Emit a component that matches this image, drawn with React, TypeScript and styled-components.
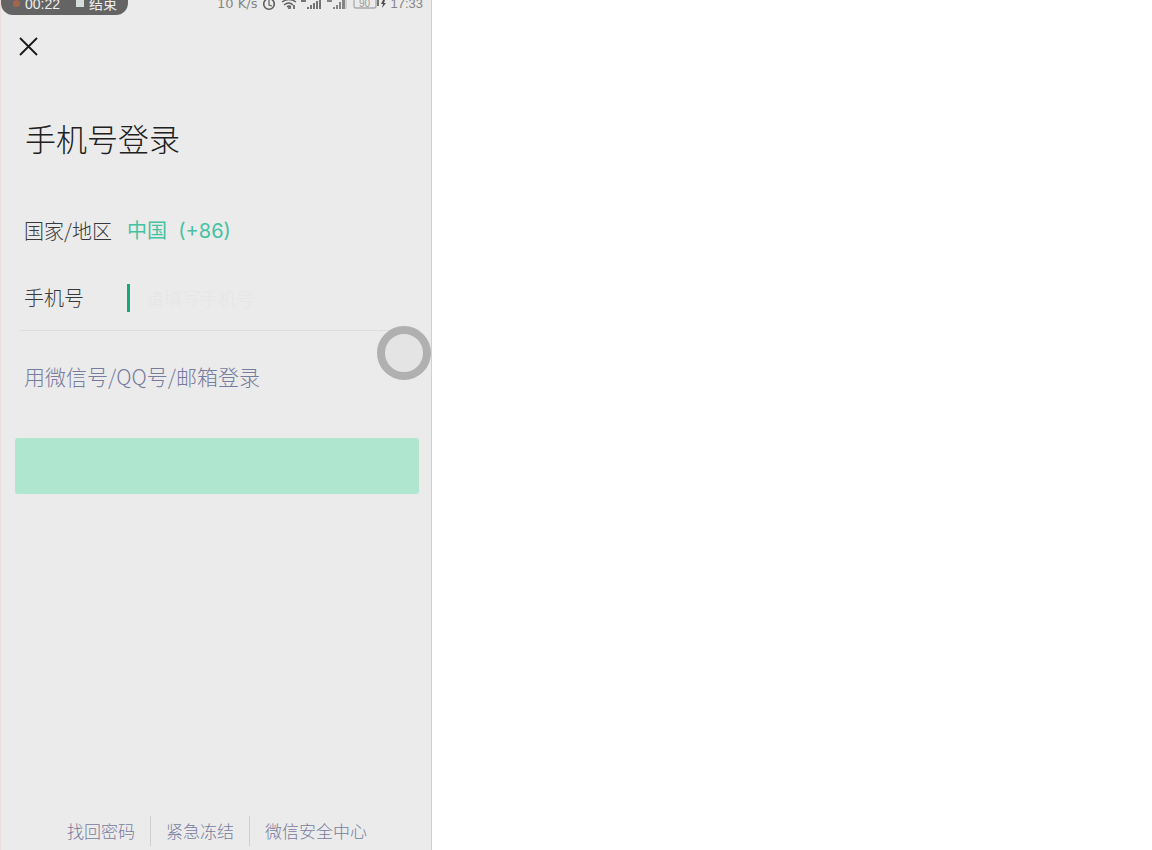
import React from "react";
import styled, { createGlobalStyle } from "styled-components";

const GlobalStyle = createGlobalStyle`
  * { box-sizing: border-box; }
  body {
    margin: 0;
    background: #fff;
    font-family: "Noto Sans CJK SC", "Noto Sans", sans-serif;
  }
`;

const Screen = styled.main`
  position: relative;
  display: flex;
  flex-direction: column;
  width: 37.5%;
  min-height: 100vh;
  overflow: hidden;
  background: #ebebeb;
  border-left: 1px solid #eedddd;
  border-right: 1px solid #a9dcf8;
`;

const StatusBar = styled.header`
  display: flex;
  justify-content: space-between;
  height: 15px;
  padding-right: 8px;
  font-family: "Liberation Sans", "Noto Sans CJK SC", sans-serif;
  font-size: 13px;
  line-height: 8px;
  white-space: nowrap;
  color: #858585;
`;

const RecordingPill = styled.div`
  display: flex;
  width: 127px;
  height: 15px;
  padding-left: 12px;
  border-radius: 0 0 12px 12px;
  background: #646464;
  color: #efefef;
  font-size: 14px;
`;

const RecordDot = styled.span`
  width: 7px;
  height: 7px;
  margin-right: 5px;
  border-radius: 50%;
  background: #a0654c;
`;

const StopSquare = styled.span`
  width: 8px;
  height: 7px;
  margin: 0 5px 0 16px;
  background: #d5dcdc;
`;

const StatusItems = styled.div`
  display: flex;
  gap: 4px;
`;

const Speed = styled.span`
  font-family: "DejaVu Sans", sans-serif;
`;

const StatusIcons = styled.svg`
  display: block;
  width: 125px;
  height: 12px;
`;

const CloseButton = styled.button`
  align-self: flex-start;
  display: flex;
  margin: 22px 0 0 17px;
  padding: 0;
  border: 0;
  background: none;
  color: #181818;
`;

const Title = styled.h1`
  margin: 60px 0 0 24px;
  font-size: 31px;
  font-weight: 300;
  line-height: 42px;
  color: #202020;
`;

const Form = styled.form`
  display: flex;
  flex-direction: column;
`;

const Field = styled.div`
  display: flex;
  align-items: center;
  height: 68px;
  margin: 0 18px 0 19px;
  padding-left: 4px;
  font-size: 20px;
  font-weight: 300;
  line-height: 28px;
  white-space: nowrap;
  color: #383838;
`;

const RegionField = styled(Field)`
  margin-top: 38px;
`;

const PhoneField = styled(Field)`
  height: 66px;
  border-bottom: 1px solid #dedede;
`;

const Label = styled.label`
  flex: 0 0 103px;
`;

const RegionButton = styled.button`
  padding: 0;
  border: 0;
  background: none;
  font-family: Inter, "Noto Sans CJK SC", sans-serif;
  font-size: 20px;
  line-height: 28px;
  white-space: pre;
  color: #45c2a0;
`;

const Caret = styled.span`
  width: 3px;
  height: 28px;
  background: #16a87c;
`;

const PhoneInput = styled.input`
  flex: 1;
  min-width: 0;
  padding: 0 0 0 16px;
  border: 0;
  outline: 0;
  background: none;
  font: inherit;
  font-size: 18px;
  &::placeholder { color: #e6e6e6; opacity: 1; }
`;

const TextLink = styled.a`
  color: #777b9e;
  text-decoration: none;
  white-space: nowrap;
`;

const AlternativeLink = styled(TextLink)`
  align-self: flex-start;
  margin: 31px 0 0 23px;
  font-size: 21px;
  font-weight: 300;
  line-height: 28px;
`;

const SubmitButton = styled.button`
  height: 56px;
  margin: 48px 12px 0 14px;
  border: 0;
  border-radius: 3px;
  background: #aee6cf;
`;

const Footer = styled.nav`
  display: flex;
  justify-content: center;
  margin-top: auto;
  padding: 0 0 4px 2px;
  font-size: 17px;
  font-weight: 300;
  line-height: 30px;
`;

const FooterLink = styled(TextLink)`
  padding: 0 15px;
  & + & { border-left: 1px solid #d0d0d2; }
`;

const AssistiveBall = styled.button`
  position: absolute;
  top: 326px;
  right: 0;
  width: 54px;
  height: 54px;
  padding: 0;
  border: 8px solid #b0b0b0;
  border-radius: 50%;
  background: #e4e4e4;
`;

export default function App() {
  return (
    <>
      <GlobalStyle />
      <Screen>
        <StatusBar>
          <RecordingPill>
            <RecordDot />
            <span>00:22</span>
            <StopSquare />
            <span>结束</span>
          </RecordingPill>
          <StatusItems>
            <Speed>10 K/s</Speed>
            <StatusIcons viewBox="0 0 125 12" aria-hidden="true">
              <g fill="none" stroke="#5c5c5c" strokeWidth="1.6">
                <circle cx="8" cy="4" r="5.3" />
                <path d="M8 0v5l3 1" strokeWidth="1.2" />
                <path d="M21 2q7-5 14 0M23 5q5-4 9 0M26 7q2-2 4 0" strokeWidth="1.3" />
              </g>
              <path d="M27 7h3v2h-3zM32 5h2v4h-2z" fill="#777" />
              <path d="M40 0h5v2h-5zM46 7h2v2h-2zM49 5h2v4h-2zM52 3h2v6h-2zM55 1h2v8h-2zM58 0h2v9h-2z" fill="#737373" />
              <path d="M66 0h5v2h-5zM72 7h2v2h-2zM75 5h2v4h-2zM78 2h2v7h-2zM81 0h3v9h-3z" fill="#858585" />
              <path d="M85 0v9" stroke="#b8b8b8" />
              <path d="M93 0v6q0 2 2 2h18q2 0 2-2V0" fill="none" stroke="#aaa" strokeWidth="1.3" />
              <text x="98" y="7" fill="#999" fontSize="10">90</text>
              <path d="M116 0h2v6h-2z" fill="#777" />
              <path d="M122 0l-2 4h2l-1 4 4-5h-2l1-3z" fill="#505050" />
            </StatusIcons>
            <span>17:33</span>
          </StatusItems>
        </StatusBar>
        <CloseButton type="button" aria-label="关闭">
          <svg width="20" height="20" viewBox="0 0 20 20" fill="none" stroke="currentColor" strokeWidth="1.8">
            <path d="M2 1l17 17M19 1L2 18" />
          </svg>
        </CloseButton>
        <Title>手机号登录</Title>
        <Form onSubmit={(event) => event.preventDefault()}>
          <RegionField>
            <Label htmlFor="region">国家/地区</Label>
            <RegionButton id="region" type="button">中国  (+86)</RegionButton>
          </RegionField>
          <PhoneField>
            <Label htmlFor="phone">手机号</Label>
            <Caret />
            <PhoneInput id="phone" type="tel" placeholder="请填写手机号" />
          </PhoneField>
          <AlternativeLink href="#account">用微信号/QQ号/邮箱登录</AlternativeLink>
          <SubmitButton type="submit" aria-label="下一步" />
        </Form>
        <Footer>
          <FooterLink href="#password">找回密码</FooterLink>
          <FooterLink href="#freeze">紧急冻结</FooterLink>
          <FooterLink href="#security">微信安全中心</FooterLink>
        </Footer>
        <AssistiveBall type="button" aria-label="悬浮球" />
      </Screen>
    </>
  );
}
